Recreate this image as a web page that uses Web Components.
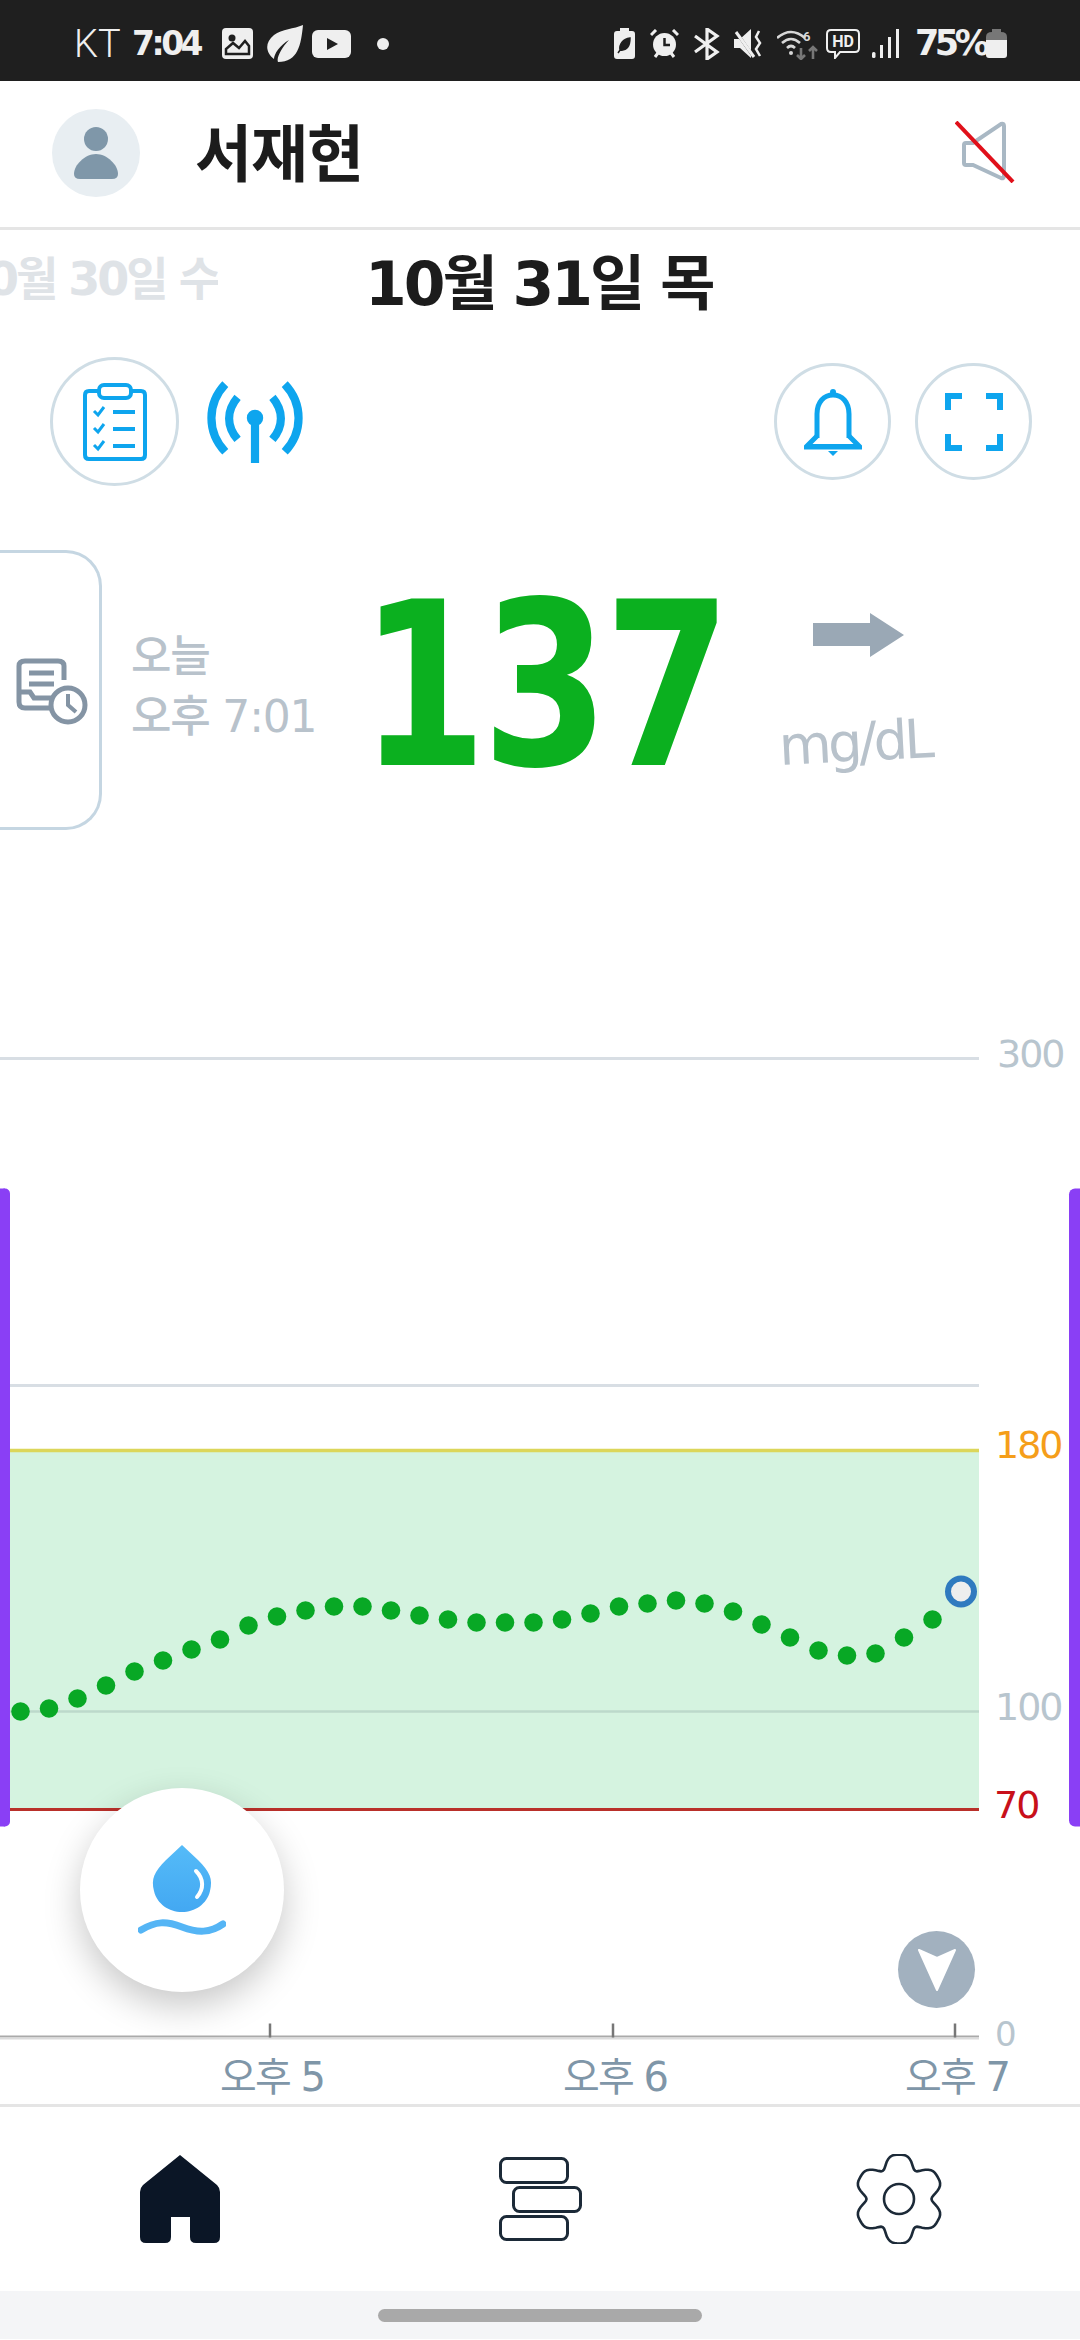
<!DOCTYPE html>
<html lang="ko">
<head>
<meta charset="utf-8">
<title>Glucose</title>
<style>
  html, body { margin: 0; background: #fff; }
  body { font-family: "Noto Sans CJK KR", "Noto Sans", sans-serif; }
  app-shell { width: 1080px; height: 2340px; }
</style>
</head>
<body>
<app-shell>
  <status-bar></status-bar>
  <user-header name="서재현"></user-header>
  <date-row prev="10월 30일 수" current="10월 31일 목"></date-row>
  <tool-row></tool-row>
  <reading-panel value="137" day="오늘" time="오후 7:01" unit="mg/dL"></reading-panel>
  <glucose-chart></glucose-chart>
  <bottom-nav></bottom-nav>
</app-shell>

<script>
const HAND = `"DejaVu Sans", "Noto Sans CJK KR", sans-serif`;
const BLUE = "#0ea5ee";

class AppShell extends HTMLElement {
  constructor() {
    super();
    this.attachShadow({ mode: "open" });
    this.shadowRoot.innerHTML = `
    <style>
      :host { display: flex; flex-direction: column; overflow: hidden; position: relative; background: #fff; }
    </style>
    <slot></slot>`;
  }
}

class StatusBar extends HTMLElement {
  constructor() {
    super();
    this.attachShadow({ mode: "open" });
  }

  static get styles() {
    return `
      :host {
        display: flex;
        align-items: center;
        flex: none;
        height: 81px;
        padding: 6px 73px 0 74px;
        box-sizing: border-box;
        background: #1f1f1f;
        color: #efefef;
      }
      .row { display: flex; align-items: center; }
      .spacer { flex: 1; }
      svg { display: block; flex: none; }
      .kt { font: 300 38px/1 Roboto, sans-serif; width: 58px; }
      .time { font: 700 33px/1 ${HAND}; letter-spacing: -3.5px; width: 90px; }
      .pct { font: 700 35px/1 ${HAND}; letter-spacing: -4.5px; width: 71px; }
    `;
  }

  connectedCallback() {
    this.shadowRoot.innerHTML = `
    <style>${StatusBar.styles}</style>
    <div class="row">
      <span class="kt">KT</span>
      <span class="time">7:04</span>
      <svg width="31" height="31" viewBox="0 0 31 31"><rect width="31" height="31" rx="4" fill="#efefef"/><circle cx="10" cy="10" r="3.5" fill="#1f1f1f"/><path d="M4 26V21L11 15L17 20L23 13L27 18V26Z" fill="none" stroke="#1f1f1f" stroke-width="2.5"/></svg>
      <svg style="margin-left:13px" width="37" height="37" viewBox="0 0 37 37"><path d="M37 0C35 20 32 37 12 37C10 33 16 22 23 15C14 20 8 29 8 34C0 28-2 18 8 10C16 4 28 4 37 0Z" fill="#efefef"/></svg>
      <svg style="margin-left:9px" width="39" height="28" viewBox="0 0 39 28"><rect width="39" height="28" rx="6" fill="#efefef"/><path d="M15 8L26 14L15 20Z" fill="#1f1f1f"/></svg>
      <svg style="margin-left:26px" width="12" height="12" viewBox="0 0 12 12"><circle cx="6" cy="6" r="6" fill="#efefef"/></svg>
    </div>
    <div class="spacer"></div>
    <div class="row">
      <svg width="21" height="31" viewBox="0 0 21 31"><path d="M6 0H15V3H18Q21 3 21 6V28Q21 31 18 31H3Q0 31 0 28V6Q0 3 3 3H6Z" fill="#efefef"/><path d="M16 10C16 18 13 23 6 22C5 16 9 11 16 10ZM4 25L11 15" fill="#1f1f1f" stroke="#1f1f1f" stroke-width="1.5"/></svg>
      <svg style="margin-left:15px" width="29" height="29" viewBox="0 0 29 29"><circle cx="14.5" cy="15.5" r="11.5" fill="#efefef"/><path d="M14.5 9V16H20" fill="none" stroke="#1f1f1f" stroke-width="2.5"/><path d="M1 6L6 1M28 6L23 1M5 28L8 24M24 28L21 24" stroke="#efefef" stroke-width="3"/></svg>
      <svg style="margin-left:14px" width="28" height="32" viewBox="0 0 28 32" fill="none" stroke="#efefef" stroke-width="3.2"><path d="M2 8L24 24L14 31V1L24 8L2 24"/></svg>
      <svg style="margin-left:13px" width="30" height="29" viewBox="0 0 30 29"><path d="M0 10H6L17 0V29L6 19H0Z" fill="#efefef"/><path d="M0 0L19 27" stroke="#1f1f1f" stroke-width="3"/><path d="M2 3L20 28" stroke="#efefef" stroke-width="3"/><path d="M25 2L22 8L26 14L22 20L26 27" fill="none" stroke="#efefef" stroke-width="2.5"/></svg>
      <svg style="margin-left:13px" width="42" height="32" viewBox="0 0 42 32" fill="none" stroke="#d8d8d8" stroke-width="2.6"><path d="M0 10Q14-2 28 10M5 15Q14 7 23 15M10 20Q14 16 18 20"/><circle cx="14" cy="25" r="2" fill="#d8d8d8" stroke="none"/><text x="26" y="13" font-family="Roboto" font-size="13" font-weight="700" fill="#d8d8d8" stroke="none">6</text><path d="M24 20V31M20 27L24 31L28 27" stroke="#777"/><path d="M36 31V19M32 23L36 19L40 23" stroke="#777"/></svg>
      <svg style="margin-left:7px" width="34" height="30" viewBox="0 0 34 30"><path d="M5 1H29Q33 1 33 5V19Q33 23 29 23H14L9 29V23H5Q1 23 1 19V5Q1 1 5 1Z" fill="none" stroke="#efefef" stroke-width="2"/><text x="17" y="18" text-anchor="middle" font-family="Roboto" font-size="16" font-weight="700" fill="#efefef">HD</text></svg>
      <svg style="margin-left:12px" width="27" height="29" viewBox="0 0 27 29" fill="#efefef"><rect y="23" width="3.5" height="6" rx="1.5"/><rect x="8" y="16" width="3" height="13"/><rect x="16" y="8" width="3" height="21"/><rect x="24" y="0" width="3" height="29"/></svg>
      <span class="pct" style="margin-left:16px">75%</span>
      <svg style="margin-left:0" width="21" height="29" viewBox="0 0 21 29"><path d="M6 0H15V3Q21 3 21 8V11H0V8Q0 3 6 3Z" fill="#777"/><path d="M0 11H21V26Q21 29 18 29H3Q0 29 0 26Z" fill="#efefef"/></svg>
    </div>`;
  }
}

class UserHeader extends HTMLElement {
  constructor() {
    super();
    this.attachShadow({ mode: "open" });
  }

  static get styles() {
    return `
      :host {
        display: flex;
        align-items: center;
        flex: none;
        height: 149px;
        box-sizing: border-box;
        padding: 0 67px 0 52px;
        border-bottom: 3px solid #e5e5e5;
      }
      .avatar {
        width: 88px;
        height: 88px;
        margin-top: -3px;
        border-radius: 50%;
        background: #e8eef2;
        display: grid;
        place-items: center;
      }
      .name {
        flex: 1;
        margin: -8px 0 0 55px;
        font: 700 62px/1.2 "Noto Sans CJK KR", sans-serif;
        letter-spacing: -1px;
        color: #1c1c1c;
      }
      svg { display: block; }
    `;
  }

  connectedCallback() {
    this.shadowRoot.innerHTML = `
    <style>${UserHeader.styles}</style>
    <div class="avatar">
      <svg width="44" height="52" viewBox="0 0 44 52" fill="#7f97a9"><ellipse cx="22" cy="12" rx="12" ry="12"/><path d="M22 27C33 27 44 38 44 47Q44 52 38 52H6Q0 52 0 47C0 38 11 27 22 27Z"/></svg>
    </div>
    <div class="name">${this.getAttribute("name")}</div>
    <svg width="60" height="62" viewBox="0 0 60 62" style="margin:-5px -2px 0 2px">
      <path d="M9 24V42Q9 44 11 44H18L46 57Q49 58 49 55V5Q49 2 46 3L18 22H11Q9 22 9 24Z" fill="none" stroke="#a9b8c4" stroke-width="4"/>
      <path d="M1 1L58 61" stroke="#e0101a" stroke-width="4"/>
    </svg>`;
  }
}

class DateRow extends HTMLElement {
  constructor() {
    super();
    this.attachShadow({ mode: "open" });
  }

  static get styles() {
    return `
      :host {
        display: flex;
        align-items: center;
        flex: none;
        height: 108px;
        overflow: hidden;
      }
      .prev {
        flex: none;
        width: 218px;
        margin-top: -8px;
        display: flex;
        justify-content: flex-end;
        overflow: hidden;
        white-space: nowrap;
        font: 700 46px/1.2 ${HAND};
        letter-spacing: -3px;
        color: #dfe3e7;
      }
      .current {
        margin-left: 147px;
        white-space: nowrap;
        font: 700 60px/1.2 ${HAND};
        letter-spacing: -3px;
        color: #1c1c1c;
      }
    `;
  }

  connectedCallback() {
    this.shadowRoot.innerHTML = `
    <style>${DateRow.styles}</style>
    <div class="prev"><span>${this.getAttribute("prev")}</span></div>
    <div class="current">${this.getAttribute("current")}</div>`;
  }
}

class RoundButton extends HTMLElement {
  constructor() {
    super();
    this.attachShadow({ mode: "open" });
    this.shadowRoot.innerHTML = `
    <style>
      :host {
        display: grid;
        place-items: center;
        box-sizing: border-box;
        flex: none;
        border: 3px solid #cfdde5;
        border-radius: 50%;
      }
    </style>
    <slot></slot>`;
  }
}

class ToolRow extends HTMLElement {
  constructor() {
    super();
    this.attachShadow({ mode: "open" });
  }

  static get styles() {
    return `
      :host {
        display: flex;
        align-items: center;
        flex: none;
        height: 167px;
        padding: 0 48px 0 50px;
      }
      svg { display: block; flex: none; }
      .big { width: 129px; height: 129px; }
      .small { width: 117px; height: 117px; }
      .spacer { flex: 1; }
    `;
  }

  connectedCallback() {
    this.shadowRoot.innerHTML = `
    <style>${ToolRow.styles}</style>
    <round-button class="big">
      <svg width="64" height="78" viewBox="0 0 64 78" fill="none" stroke="${BLUE}" stroke-width="4">
        <path d="M16 8H6Q2 8 2 12V72Q2 76 6 76H58Q62 76 62 72V12Q62 8 58 8H48"/>
        <rect x="16" y="2" width="32" height="13" rx="5"/>
        <path d="M11 28L15 32L21 24M11 45L15 49L21 41M11 62L15 66L21 58" stroke-width="3"/>
        <path d="M30 29H52M30 46H52M30 63H52" stroke-width="4"/>
      </svg>
    </round-button>
    <svg style="margin-left:26px" width="100" height="82" viewBox="0 0 96 80" fill="none" stroke="${BLUE}" stroke-width="8">
      <path d="M19 3C1 22 1 50 19 69M77 3C95 22 95 50 77 69"/>
      <path d="M31 16C20 29 20 44 31 57M65 16C76 29 76 44 65 57"/>
      <circle cx="48" cy="36" r="8" fill="${BLUE}" stroke="none"/>
      <path d="M48 38V80" stroke-width="8"/>
    </svg>
    <div class="spacer"></div>
    <round-button class="small">
      <svg width="58" height="68" viewBox="0 0 58 68" fill="none" stroke="${BLUE}" stroke-width="5">
        <circle cx="29" cy="4" r="3" fill="${BLUE}" stroke="none"/>
        <path d="M13 50V26C13 14 20 7 29 7C38 7 45 14 45 26V50"/>
        <path d="M13 48L2 59H56L45 48" fill="none"/>
        <path d="M2 58H56" stroke-width="4"/>
        <path d="M24 63H34L29 68Z" fill="${BLUE}" stroke="none"/>
      </svg>
    </round-button>
    <round-button class="small" style="margin-left:24px">
      <svg width="58" height="58" viewBox="0 0 58 58" fill="none" stroke="${BLUE}" stroke-width="6">
        <path d="M3 17V3H17M41 3H55V17M3 41V55H17M41 55H55V41"/>
      </svg>
    </round-button>`;
  }
}

class ReadingPanel extends HTMLElement {
  constructor() {
    super();
    this.attachShadow({ mode: "open" });
  }

  static get styles() {
    return `
      :host {
        display: flex;
        flex: none;
        align-items: center;
        height: 280px;
        margin-top: 45px;
      }
      .tab {
        flex: none;
        box-sizing: border-box;
        width: 102px;
        height: 280px;
        border: 3px solid #c5d6e2;
        border-left: 0;
        border-radius: 0 36px 36px 0;
        display: grid;
        place-items: center;
      }
      .tab svg { margin: 4px 0 0 4px; }
      .when {
        flex: none;
        width: 226px;
        margin-left: 29px;
        margin-top: -7px;
        white-space: nowrap;
        font: 500 44px/60px ${HAND};
        letter-spacing: -1.2px;
        color: #b8c2cb;
      }
      .value {
        flex: none;
        width: 422px;
        margin-top: -8px;
        white-space: nowrap;
        font: 700 228px/280px "DejaVu Sans", sans-serif;
        letter-spacing: -6px;
        color: #0bb01f;
        transform: translateX(3px) scaleX(0.8);
        transform-origin: left center;
      }
      .side {
        flex: none;
        display: flex;
        flex-direction: column;
        align-items: flex-start;
      }
      .arrow { margin: 5px 0 56px 34px; display: block; }
      .unit {
        font: 500 54px/60px ${HAND};
        letter-spacing: -3.5px;
        color: #b8c2cb;
        transform: rotate(-3deg);
      }
      svg { display: block; }
    `;
  }

  connectedCallback() {
    this.shadowRoot.innerHTML = `
    <style>${ReadingPanel.styles}</style>
    <div class="tab">
      <svg width="72" height="68" viewBox="0 0 72 68" fill="none" stroke="#8494a4" stroke-width="5">
        <path d="M42 50H9Q3 50 3 44V8Q3 3 9 3H42Q48 3 48 8V22"/>
        <path d="M3 34H14L18 40H36"/>
        <path d="M13 15H38M13 26H38"/>
        <circle cx="52" cy="47" r="17" fill="#fff"/>
        <path d="M52 36V47L60 54" stroke-width="4"/>
      </svg>
    </div>
    <div class="when">${this.getAttribute("day")}<br>${this.getAttribute("time")}</div>
    <div class="value">${this.getAttribute("value")}</div>
    <div class="side">
      <svg class="arrow" width="91" height="44" viewBox="0 0 91 44"><path d="M0 10H57V0L91 22L57 44V33H0Z" fill="#9aa8b5"/></svg>
      <div class="unit">${this.getAttribute("unit")}</div>
    </div>`;
  }
}

const DOT_Y = [1711,1708,1698,1685,1671,1660,1649,1639,1625,1616,1610,1606,1606,1610,1615,1619,1622,1622,1622,1619,1613,1606,1603,1600,1603,1611,1624,1637,1650,1655,1653,1637,1619];

class GlucoseChart extends HTMLElement {
  constructor() {
    super();
    this.attachShadow({ mode: "open" });
  }

  static get styles() {
    return `
      :host {
        display: block;
        position: relative;
        flex: none;
        height: 1105px;
        margin-top: 169px;
      }
      svg.plot { display: block; width: 1080px; height: 1105px; }
      text { font-family: ${HAND}; font-weight: 400; letter-spacing: -2px; }
      .fab {
        position: absolute;
        left: 80px;
        top: 789px;
        width: 204px;
        height: 204px;
        border-radius: 50%;
        background: #fff;
        box-shadow: 0 14px 36px rgba(0,0,0,.22);
        display: grid;
        place-items: center;
      }
      .down {
        position: absolute;
        left: 898px;
        top: 932px;
        width: 77px;
        height: 77px;
        border-radius: 50%;
        background: #a2b1bf;
        display: grid;
        place-items: center;
      }
      .fab svg, .down svg { display: block; }
    `;
  }

  dots() {
    return DOT_Y.map((y, i) => `<circle cx="${20.5 + i * 28.5}" cy="${y}" r="9.3" fill="#08a825"/>`).join("");
  }

  ticks() {
    return [[270, "오후 5", 272], [613, "오후 6", 615], [955, "오후 7", 957]].map(([x, label, lx]) => `
      <path d="M${x} 2023V2037" stroke="#777" stroke-width="2.5"/>
      <text x="${lx}" y="2090" text-anchor="middle" font-size="40" fill="#7f96a8">${label}</text>`).join("");
  }

  render() {
    this.shadowRoot.innerHTML = `
    <style>${GlucoseChart.styles}</style>
    <svg class="plot" viewBox="0 998.5 1080 1105">
      <rect x="10" y="1450" width="969" height="359" fill="#d5f3e0"/>
      <path d="M0 1058H979" stroke="#d8dee4" stroke-width="3"/>
      <path d="M10 1385H979" stroke="#d8dee4" stroke-width="3"/>
      <path d="M10 1711H979" stroke="#bcd9cb" stroke-width="2.5"/>
      <path d="M10 1450H979" stroke="#dcd65a" stroke-width="3.5"/>
      <path d="M0 1809H979" stroke="#b9302a" stroke-width="3"/>
      <path d="M0 2036H979" stroke="#aaaaaa" stroke-width="2"/>
      <path d="M0 2038H979" stroke="#dcdcdc" stroke-width="2"/>
      <rect x="0" y="1188" width="10" height="638" rx="5" fill="#8a3ff5"/>
      <rect x="-5" y="1188" width="10" height="638" fill="#8a3ff5"/>
      <rect x="1069" y="1188" width="20" height="638" rx="6" fill="#8a3ff5"/>
      ${this.dots()}
      <circle cx="961" cy="1591" r="13" fill="#eeeeee" stroke="#2f7abf" stroke-width="6"/>
      <text x="997" y="1066" font-size="38" fill="#b8c5ce">300</text>
      <text x="995" y="1457" font-size="38" fill="#f59e1a">180</text>
      <text x="995" y="1719" font-size="38" fill="#b8c5ce">100</text>
      <text x="994" y="1817" font-size="38" fill="#c8101a">70</text>
      <text x="995" y="2045" font-size="34" fill="#b8c5ce">0</text>
      ${this.ticks()}
    </svg>
    <div class="fab">
      <svg width="88" height="90" viewBox="0 0 88 90">
        <defs><linearGradient id="drop" x1="0" y1="0" x2="0" y2="1"><stop offset="0" stop-color="#55bbf8"/><stop offset="1" stop-color="#43a8f2"/></linearGradient></defs>
        <path d="M44 0L60 15C72 27 75 34 72 46C69 59 57 67 44 67C31 67 19 59 16 46C13 34 16 27 28 15Z" fill="url(#drop)"/>
        <path d="M58 26C66 34 66 44 59 52" fill="none" stroke="#fff" stroke-width="4" stroke-linecap="round"/>
        <path d="M3 85C18 76 28 76 44 82C60 88 72 88 85 79" fill="none" stroke="#55b5f5" stroke-width="7" stroke-linecap="round"/>
      </svg>
    </div>
    <div class="down">
      <svg width="40" height="44" viewBox="0 0 40 44"><path d="M2 2L20 10L38 2L20 42Z" fill="#fff" stroke="#fff" stroke-width="2" stroke-linejoin="round"/></svg>
    </div>`;
  }

  connectedCallback() {
    this.render();
  }
}

class BottomNav extends HTMLElement {
  constructor() {
    super();
    this.attachShadow({ mode: "open" });
  }

  static get styles() {
    return `
      :host {
        display: flex;
        flex-direction: column;
        flex: none;
        height: 235px;
      }
      .bar {
        flex: none;
        height: 187px;
        box-sizing: border-box;
        border-top: 3px solid #e5e5e5;
        padding: 0 136px 0 140px;
        display: flex;
        align-items: center;
        justify-content: space-between;
      }
      .home-line {
        flex: 1;
        background: #f4f5f7;
        display: flex;
        align-items: flex-start;
        justify-content: center;
        padding-top: 18px;
      }
      .pill { width: 324px; height: 13px; border-radius: 7px; background: #a9a9a9; }
      svg { display: block; flex: none; }
    `;
  }

  gearPath() {
    const pts = [];
    for (let i = 0; i < 120; i++) {
      const t = i / 120 * Math.PI * 2;
      const r = 40 + 6 * Math.cos(6 * t) - 1.5 * Math.cos(12 * t);
      pts.push(`${(45 + r * Math.sin(t)).toFixed(1)} ${(45 - r * Math.cos(t)).toFixed(1)}`);
    }
    return "M" + pts.join("L") + "Z";
  }

  connectedCallback() {
    this.shadowRoot.innerHTML = `
    <style>${BottomNav.styles}</style>
    <div class="bar">
      <svg width="80" height="88" viewBox="0 0 80 88"><path d="M40 0L77 30Q80 33 80 37V82Q80 88 74 88H56Q50 88 50 82V62H31V82Q31 88 25 88H6Q0 88 0 82V37Q0 33 3 30Z" fill="#0b1626"/></svg>
      <svg style="margin-left:6px" width="83" height="84" viewBox="0 0 83 84" fill="none" stroke="#1c2a38" stroke-width="3">
        <rect x="1.5" y="1.5" width="67" height="24" rx="6"/>
        <rect x="14.5" y="30.5" width="67" height="24" rx="6"/>
        <rect x="1.5" y="59.5" width="67" height="23" rx="6"/>
      </svg>
      <svg width="90" height="90" viewBox="0 0 90 90" fill="none" stroke="#1c2a38" stroke-width="2.6">
        <path d="${this.gearPath()}"/>
        <circle cx="45" cy="45" r="15"/>
      </svg>
    </div>
    <div class="home-line"><div class="pill"></div></div>`;
  }
}

customElements.define("app-shell", AppShell);
customElements.define("status-bar", StatusBar);
customElements.define("user-header", UserHeader);
customElements.define("date-row", DateRow);
customElements.define("round-button", RoundButton);
customElements.define("tool-row", ToolRow);
customElements.define("reading-panel", ReadingPanel);
customElements.define("glucose-chart", GlucoseChart);
customElements.define("bottom-nav", BottomNav);
</script>
</body>
</html>
